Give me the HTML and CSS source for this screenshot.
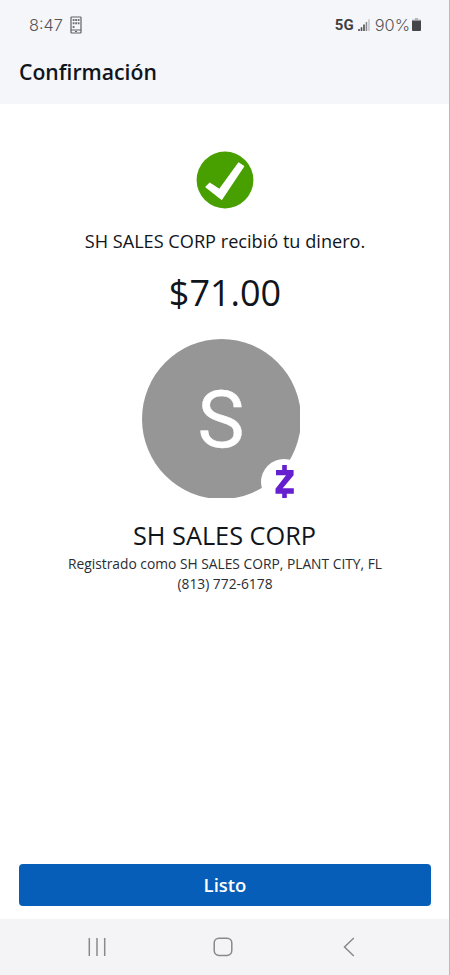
FILE: index.html
```html
<!DOCTYPE html>
<html lang="es">
<head>
<meta charset="utf-8">
<meta name="viewport" content="width=device-width, initial-scale=1">
<title>Confirmación</title>
<link rel="stylesheet" href="styles.css">
</head>
<body>
<div class="screen">
  <header class="top">
    <div class="status">
      <span class="time">8:47</span>
      <svg class="device" width="12" height="18" viewBox="0 0 12 18" aria-hidden="true">
        <rect x="1" y="1" width="10" height="16" rx=".5" fill="none" stroke="#606164" stroke-width="1.2"/>
        <path d="M1 14h10" stroke="#606164" stroke-width="1"/>
        <path d="M5 15.5h2" stroke="#606164" stroke-width="1"/>
        <path d="M2.7 3h1.8v2H2.7zM5.2 3H7v2H5.2zM7.7 3h1.8v2H7.7zM2.7 6.2h1.8v2H2.7zM5.2 6.2H7v2H5.2zM7.7 6.2h1.8v2H7.7zM2.7 10h1.8v2H2.7z" fill="#707174"/>
      </svg>
      <span class="network">5G</span>
      <svg class="signal" width="12" height="12" viewBox="0 0 12 12" aria-hidden="true">
        <path d="M.2 10h1.6v2H.2zM2.7 8.2h1.6V12H2.7zM5.2 5.5h1.6V12H5.2z" fill="#4c4d50"/>
        <path d="M7.7 3h1.5v9H7.7z" fill="#85868a"/>
        <path d="M10.2 .3h1.5V12h-1.5z" fill="#c4c5c8"/>
      </svg>
      <span class="percent">90%</span>
      <svg class="battery" width="9" height="13" viewBox="0 0 9 13" aria-hidden="true">
        <path d="M3 0h3v1.4h2.2q.8 0 .8.8V4H0V2.2q0-.8.8-.8H3z" fill="#b4b5b8"/>
        <path d="M0 2.8h9V12q0 1-1 1H1q-1 0-1-1z" fill="#444548"/>
      </svg>
    </div>
    <h1 class="title">Confirmación</h1>
  </header>
  <main class="content">
    <svg class="check" width="58" height="58" viewBox="0 0 58 58" aria-hidden="true">
      <circle cx="29" cy="29" r="28.4" fill="#48a000"/>
      <path d="M10 36L13.8 32.2 23.4 38.6 42.6 12 47.6 15.3 25.6 48.4z" fill="#fff" stroke="#fff" stroke-width="1.2" stroke-linejoin="round"/>
    </svg>
    <p class="message"><span>SH SALES CORP recibió tu dinero.</span></p>
    <p class="amount"><span>$71.00</span></p>
    <div class="avatar">
      <div class="photo"><div class="disc"><span class="initial">S</span></div></div>
      <svg class="badge" width="46" height="46" viewBox="0 0 46 46" aria-hidden="true">
        <circle cx="23" cy="23" r="23" fill="#fff"/>
        <path d="M21.2 6h4.6v5h6.8v5.2L21.7 29.3h11.1v5.4h-7V39h-4.6v-4.3h-6.7v-5L25 16.3H15V11h6.2z" fill="#661fce"/>
      </svg>
    </div>
    <h2 class="name"><span>SH SALES CORP</span></h2>
    <p class="detail registered"><span>Registrado como SH SALES CORP, PLANT CITY, FL</span></p>
    <p class="detail phone"><span>(813) 772-6178</span></p>
  </main>
  <button class="done" type="button">Listo</button>
  <nav class="nav">
    <svg width="18" height="20" viewBox="0 0 18 20" aria-hidden="true"><path d="M1.3 1v18M9 1v18M16.7 1v18" stroke="#88898c" stroke-width="1.5"/></svg>
    <svg class="home" width="20" height="20" viewBox="0 0 20 20" aria-hidden="true"><rect x="1.2" y="1.2" width="17.6" height="17.2" rx="4.8" fill="none" stroke="#88898c" stroke-width="1.5"/></svg>
    <svg width="12" height="20" viewBox="0 0 12 20" aria-hidden="true"><path d="M10.8 1L1.5 10l9.3 9" fill="none" stroke="#88898c" stroke-width="1.5"/></svg>
  </nav>
</div>
</body>
</html>
```
FILE: styles.css
```css
* { box-sizing: border-box; }
body { margin: 0; }
h1, h2, p { margin: 0; font-weight: 400; white-space: nowrap; }
svg { display: block; flex: none; }

.screen {
  display: flex;
  flex-direction: column;
  width: 450px;
  height: 975px;
  overflow: hidden;
  background: #fff;
  border-right: 1px solid #b9babc;
  color: #10151c;
  font-family: "Open Sans", "Noto Sans", sans-serif;
}

.top { height: 104px; background: #f5f6f9; }
.status {
  display: flex;
  align-items: center;
  height: 49px;
  padding: 0 28px 0 29px;
  color: #55565a;
  font-family: Inter, Roboto, sans-serif;
}
.time { font-size: 16.3px; font-weight: 300; width: 33px; }
.device { margin-left: 8px; }
.network { margin-left: auto; font: 700 15px Roboto, sans-serif; color: #3f4043; }
.signal { margin: 0 5px 0 4px; }
.percent { font-size: 16.4px; font-weight: 300; }
.battery { margin-left: 2px; }
.title { padding-left: 19px; font-size: 21.2px; font-weight: 600; line-height: 46px; }

.content {
  display: flex;
  flex-direction: column;
  align-items: center;
  flex: 1;
  padding-top: 47px;
}
.message { margin-top: 18px; padding-left: 1px; font-size: 18.15px; line-height: 28px; }
.amount { margin-top: 13px; padding-left: 1px; font-size: 36px; line-height: 50px; }
.avatar { position: relative; width: 159px; height: 159px; margin: 21px 7px 0 0; }
.photo { width: 158px; height: 159px; overflow: hidden; }
.disc {
  display: flex;
  align-items: center;
  justify-content: center;
  width: 159px;
  height: 160px;
  padding-top: 2px;
  border-radius: 50%;
  background: #969696;
}
.initial { color: #fff; font: 400 79px/1 Roboto, sans-serif; -webkit-text-stroke: .4px #fff; }
.badge { position: absolute; left: 119px; top: 120px; }
.name { margin-top: 18px; font-size: 25.3px; line-height: 38px; }
.detail { padding-left: 1px; font-size: 13.8px; line-height: 20px; color: #292d33; }

.done {
  height: 42px;
  margin: 0 18px 13px 19px;
  padding: 0 0 2px;
  border: 0;
  border-radius: 4px;
  background: #065eb9;
  color: #fff;
  font: 600 18.5px "Open Sans", sans-serif;
}
.nav {
  display: flex;
  justify-content: space-between;
  align-items: center;
  height: 56px;
  padding: 0 94px 0 88px;
  background: #f4f4f7;
}
.home { margin-right: 4px; }
```
